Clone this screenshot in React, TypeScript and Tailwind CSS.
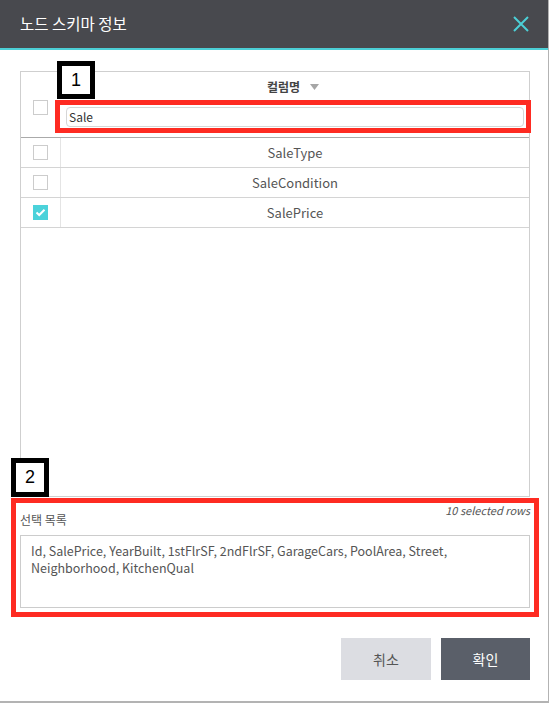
import React from 'react';

const rows = [
  { name: "SaleType", checked: false },
  { name: "SaleCondition", checked: false },
  { name: "SalePrice", checked: true },
];

const CheckBox = ({ checked }: { checked?: boolean }) =>
  checked ? (
    <span className="flex items-center justify-center w-[15px] h-[15px] bg-[#4bd2da]">
      <svg width="11" height="9" viewBox="0 0 11 9" fill="none">
        <path d="M1.5 4.5 L4.2 7 L9.5 1.8" stroke="white" strokeWidth="2" />
      </svg>
    </span>
  ) : (
    <span className="block w-[15px] h-[15px] border border-[#cccccc] bg-white" />
  );

const App = () => {
  return (
    <div className="relative w-[551px] h-[703px] bg-white font-['Noto_Sans_CJK_KR',sans-serif]">
      <div className="w-[549px] h-[703px] flex flex-col border-r border-b-2 border-[#b3b3b3]">
        {/* Title bar */}
        <div className="h-[50px] shrink-0 flex items-center justify-between pl-5 pr-[19px] bg-[#48494e] border-b-2 border-[#4ccfd6]">
          <span className="text-[15.5px] text-white">노드 스키마 정보</span>
          <svg width="16" height="16" viewBox="0 0 16 16" fill="none">
            <path d="M1 1 L15 15 M15 1 L1 15" stroke="#4ccfd6" strokeWidth="2" />
          </svg>
        </div>

        <div className="flex-1 flex flex-col pl-5 pr-[18px] pt-[21px]">
          {/* Column table */}
          <div className="h-[426px] border border-[#cfcfcf] flex flex-col">
            <div className="h-[66px] flex border-b border-[#aaaaaa]">
              <div className="w-[40px] pt-[28px] pl-3">
                <CheckBox />
              </div>
              <div className="flex-1 flex flex-col px-[5px] pt-[6px]">
                <div className="flex items-center justify-center gap-[10px] pr-[4px] text-[12px] leading-[17px] font-bold text-[#444444]">
                  <span>컬럼명</span>
                  <svg width="9" height="6" viewBox="0 0 9 6">
                    <path d="M0 0 H9 L4.5 6 Z" fill="#a6a6a6" />
                  </svg>
                </div>
                <div className="mt-[12px] h-[20px] flex items-center px-[2px] border border-[#d6d6d6] rounded-[4px] text-[12px] text-[#333333]">
                  Sale
                </div>
              </div>
            </div>
            {rows.map((r, idx) => (
              <div key={idx} className="h-[30px] flex border-b border-[#d4d4d4]">
                <div className="w-[40px] flex items-center pl-3 border-r border-[#e4e4e4]">
                  <CheckBox checked={r.checked} />
                </div>
                <div className="flex-1 flex items-center justify-center text-[13px] text-[#555555]">{r.name}</div>
              </div>
            ))}
          </div>

          {/* Selected list */}
          <div className="h-[38px] flex justify-between">
            <span className="pt-[14px] text-[12px] leading-[17px] text-[#555555]">선택 목록</span>
            <span className="pt-[5px] text-[11px] leading-[16px] italic text-[#555555]">10 selected rows</span>
          </div>
          <div className="h-[73px] border border-[#cccccc] px-[10px] pt-[6px] text-[12.5px] leading-[17px] text-[#555555]">
            Id, SalePrice, YearBuilt, 1stFlrSF, 2ndFlrSF, GarageCars, PoolArea, Street, Neighborhood, KitchenQual
          </div>

          {/* Buttons */}
          <div className="mt-[30px] flex justify-end gap-[10px]">
            <button className="w-[90px] h-[42px] bg-[#dcdde2] text-[14px] text-[#555555]">취소</button>
            <button className="w-[89px] h-[42px] bg-[#5a5f69] text-[14px] text-white">확인</button>
          </div>
        </div>
      </div>

      {/* Annotations */}
      <div className="absolute left-[55px] top-[100px] w-[476px] h-[33px] border-[5px] border-[#fe2b22]" />
      <div className="absolute left-[57px] top-[61px] w-[38px] h-[38px] border-[5px] border-black bg-white flex items-center justify-center font-['Liberation_Sans',sans-serif] text-[18px] text-black">1</div>
      <div className="absolute left-[11px] top-[498px] w-[528px] h-[119px] border-[5px] border-[#fe2b22]" />
      <div className="absolute left-[11px] top-[458px] w-[38px] h-[39px] border-[5px] border-black bg-white flex items-center justify-center font-['Liberation_Sans',sans-serif] text-[18px] text-black">2</div>
    </div>
  );
};

export default App;
